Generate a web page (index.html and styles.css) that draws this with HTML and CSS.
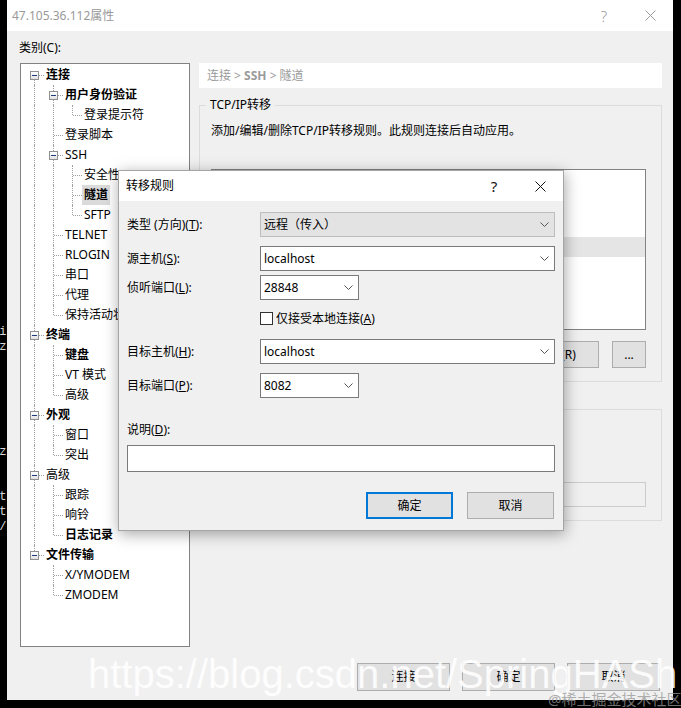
FILE: index.html
```html
<!DOCTYPE html>
<html lang="zh-CN">
<head>
<meta charset="utf-8">
<title>47.105.36.112属性</title>
<link rel="stylesheet" href="styles.css">
</head>
<body>
<div class="desk">
<pre class="term">xi
'z






.z


nt
st
0/</pre>

<div class="window">
  <div class="titlebar">
    <span class="title">47.105.36.112属性</span>
    <span class="cap cap-help">?</span>
    <span class="cap"><svg width="11" height="11" viewBox="0 0 11 11"><path d="M0.5 0.5 L10.5 10.5 M10.5 0.5 L0.5 10.5" stroke="#9a9a9a" stroke-width="1" fill="none"/></svg></span>
  </div>
  <div class="content">
    <div class="cat-label">类别(C):</div>
    <div class="main">
      <div class="tree">
        <div class="row"><span class="c f"><span class="box"></span></span><span class="lbl b">连接</span></div>
        <div class="row"><span class="c v"></span><span class="c t"><span class="box"></span></span><span class="lbl b">用户身份验证</span></div>
        <div class="row"><span class="c v"></span><span class="c v"></span><span class="c l"></span><span class="lbl">登录提示符</span></div>
        <div class="row"><span class="c v"></span><span class="c t"></span><span class="lbl">登录脚本</span></div>
        <div class="row"><span class="c v"></span><span class="c t"><span class="box"></span></span><span class="lbl">SSH</span></div>
        <div class="row"><span class="c v"></span><span class="c v"></span><span class="c t"></span><span class="lbl">安全性</span></div>
        <div class="row"><span class="c v"></span><span class="c v"></span><span class="c t"></span><span class="lbl b sel">隧道</span></div>
        <div class="row"><span class="c v"></span><span class="c v"></span><span class="c l"></span><span class="lbl">SFTP</span></div>
        <div class="row"><span class="c v"></span><span class="c t"></span><span class="lbl">TELNET</span></div>
        <div class="row"><span class="c v"></span><span class="c t"></span><span class="lbl">RLOGIN</span></div>
        <div class="row"><span class="c v"></span><span class="c t"></span><span class="lbl">串口</span></div>
        <div class="row"><span class="c v"></span><span class="c t"></span><span class="lbl">代理</span></div>
        <div class="row"><span class="c v"></span><span class="c l"></span><span class="lbl">保持活动状态</span></div>
        <div class="row"><span class="c t"><span class="box"></span></span><span class="lbl b">终端</span></div>
        <div class="row"><span class="c v"></span><span class="c t"></span><span class="lbl b">键盘</span></div>
        <div class="row"><span class="c v"></span><span class="c t"></span><span class="lbl">VT 模式</span></div>
        <div class="row"><span class="c v"></span><span class="c l"></span><span class="lbl">高级</span></div>
        <div class="row"><span class="c t"><span class="box"></span></span><span class="lbl b">外观</span></div>
        <div class="row"><span class="c v"></span><span class="c t"></span><span class="lbl">窗口</span></div>
        <div class="row"><span class="c v"></span><span class="c l"></span><span class="lbl">突出</span></div>
        <div class="row"><span class="c t"><span class="box"></span></span><span class="lbl">高级</span></div>
        <div class="row"><span class="c v"></span><span class="c t"></span><span class="lbl">跟踪</span></div>
        <div class="row"><span class="c v"></span><span class="c t"></span><span class="lbl">响铃</span></div>
        <div class="row"><span class="c v"></span><span class="c l"></span><span class="lbl b">日志记录</span></div>
        <div class="row"><span class="c l"><span class="box"></span></span><span class="lbl b">文件传输</span></div>
        <div class="row"><span class="c"></span><span class="c t"></span><span class="lbl">X/YMODEM</span></div>
        <div class="row"><span class="c"></span><span class="c l"></span><span class="lbl">ZMODEM</span></div>
      </div>
      <div class="panel">
        <div class="crumb">连接 &gt; <b>SSH</b> &gt; 隧道</div>
        <fieldset class="group">
          <legend>TCP/IP转移</legend>
          <p class="desc">添加/编辑/删除TCP/IP转移规则。此规则连接后自动应用。</p>
          <div class="listview"><div class="lv-row"></div></div>
          <div class="btnrow">
            <span class="btn w85">添加(A)...</span>
            <span class="btn w85">编辑(E)...</span>
            <span class="btn w85">删除(R)</span>
            <span class="btn w34">...</span>
          </div>
        </fieldset>
        <fieldset class="group g2">
          <legend>X11转移</legend>
          <div class="g2-row"><span class="chk"></span><span class="g2-text">转发X11连接到(X):</span></div>
          <div class="g2-field"></div>
        </fieldset>
      </div>
    </div>
    <div class="footer">
      <span class="btn fbtn">连接</span>
      <span class="btn fbtn">确定</span>
      <span class="btn fbtn">取消</span>
    </div>
  </div>
</div>

<div class="dialog">
  <div class="dtitle">
    <span class="dtitle-text">转移规则</span>
    <span class="cap dcap-help">?</span>
    <span class="cap"><svg width="11" height="11" viewBox="0 0 11 11"><path d="M0.5 0.5 L10.5 10.5 M10.5 0.5 L0.5 10.5" stroke="#111" stroke-width="1" fill="none"/></svg></span>
  </div>
  <div class="dbody">
    <div class="frow">
      <span class="flabel">类型 (方向)(<u>T</u>):</span>
      <span class="combo wide disabled"><span class="ctext">远程（传入）</span><svg class="chev" width="9" height="5" viewBox="0 0 9 5"><polyline points="0.5,0.5 4.5,4.5 8.5,0.5" fill="none" stroke="#555" stroke-width="1"/></svg></span>
    </div>
    <div class="frow r2">
      <span class="flabel">源主机(<u>S</u>):</span>
      <span class="combo wide"><span class="ctext">localhost</span><svg class="chev" width="9" height="5" viewBox="0 0 9 5"><polyline points="0.5,0.5 4.5,4.5 8.5,0.5" fill="none" stroke="#555" stroke-width="1"/></svg></span>
    </div>
    <div class="frow r3">
      <span class="flabel">侦听端口(<u>L</u>):</span>
      <span class="combo narrow"><span class="ctext">28848</span><svg class="chev" width="9" height="5" viewBox="0 0 9 5"><polyline points="0.5,0.5 4.5,4.5 8.5,0.5" fill="none" stroke="#555" stroke-width="1"/></svg></span>
    </div>
    <div class="frow rchk">
      <span class="flabel"></span>
      <span class="chk"></span><span class="chk-text">仅接受本地连接(<u>A</u>)</span>
    </div>
    <div class="frow r5">
      <span class="flabel">目标主机(<u>H</u>):</span>
      <span class="combo wide"><span class="ctext">localhost</span><svg class="chev" width="9" height="5" viewBox="0 0 9 5"><polyline points="0.5,0.5 4.5,4.5 8.5,0.5" fill="none" stroke="#555" stroke-width="1"/></svg></span>
    </div>
    <div class="frow r6">
      <span class="flabel">目标端口(<u>P</u>):</span>
      <span class="combo narrow"><span class="ctext">8082</span><svg class="chev" width="9" height="5" viewBox="0 0 9 5"><polyline points="0.5,0.5 4.5,4.5 8.5,0.5" fill="none" stroke="#555" stroke-width="1"/></svg></span>
    </div>
    <div class="dlabel">说明(<u>D</u>):</div>
    <div class="dfield"></div>
    <div class="dbtns">
      <span class="btn dbtn default">确定</span>
      <span class="btn dbtn">取消</span>
    </div>
  </div>
</div>

<div class="watermark">https://blog.csdn.net/SpringHASh</div>
<div class="juejin">@稀土掘金技术社区</div>
</div>
</body>
</html>
```

FILE: styles.css
```css
html, body {
  margin: 0;
  padding: 0;
  background: #000;
}
body {
  font-family: "Noto Sans", "Noto Sans CJK SC", sans-serif;
  font-size: 12px;
  color: #000;
}
.desk {
  position: relative;
  width: 681px;
  height: 708px;
  overflow: hidden;
  background: #000;
}
.term {
  position: absolute;
  left: -8px;
  top: 325px;
  width: 15px;
  margin: 0;
  overflow: hidden;
  font-family: "Liberation Mono", monospace;
  font-size: 12px;
  line-height: 15px;
  color: #d8d8d8;
  white-space: pre;
}

/* main window */
.window {
  position: absolute;
  left: 7px;
  top: 0;
  width: 666px;
  height: 700px;
  background: #f0f0f0;
}
.titlebar {
  display: flex;
  align-items: center;
  height: 31px;
  background: #fff;
}
.title {
  flex: 1;
  padding-left: 5px;
  color: #999;
  line-height: 16px;
}
.cap {
  flex: none;
  width: 46px;
  height: 31px;
  display: flex;
  align-items: center;
  justify-content: center;
}
.cap-help {
  color: #9a9a9a;
  font-size: 15px;
  font-weight: 300;
}
.content {
  padding: 0 11px 0 13px;
}
.cat-label {
  height: 32px;
  box-sizing: border-box;
  padding-top: 9px;
  line-height: 16px;
  margin-left: -1px;
}
.main {
  display: flex;
  gap: 9px;
  height: 584px;
}

/* tree */
.tree {
  flex: none;
  width: 170px;
  height: 584px;
  box-sizing: border-box;
  border: 1px solid #828282;
  background: #fff;
  overflow: hidden;
  padding: 1px 0 0 4px;
}
.row {
  display: flex;
  height: 20px;
  line-height: 20px;
  white-space: nowrap;
}
.c {
  flex: none;
  position: relative;
  width: 19px;
  height: 20px;
}
.c.v::before,
.c.t::before,
.c.l::before,
.c.f::before {
  content: "";
  position: absolute;
  left: 9px;
  top: 0;
  height: 20px;
  border-left: 1px dotted #a0a0a0;
}
.c.l::before {
  height: 10px;
}
.c.f::before {
  top: 10px;
  height: 10px;
}
.c.t::after,
.c.l::after,
.c.f::after {
  content: "";
  position: absolute;
  left: 10px;
  top: 10px;
  width: 9px;
  border-top: 1px dotted #a0a0a0;
}
.box {
  position: absolute;
  left: 5px;
  top: 6px;
  width: 9px;
  height: 9px;
  box-sizing: border-box;
  border: 1px solid #919191;
  background: linear-gradient(#ffffff, #e2e2e2);
  z-index: 1;
}
.box::after {
  content: "";
  position: absolute;
  left: 1px;
  top: 3px;
  width: 5px;
  height: 1px;
  background: #1f3c7a;
}
.lbl {
  padding: 0 2px;
}
.lbl.b {
  font-weight: bold;
}
.lbl.sel {
  background: #dadada;
}

/* right panel */
.panel {
  flex: none;
  width: 463px;
  display: flex;
  flex-direction: column;
}
.crumb {
  height: 25px;
  line-height: 25px;
  background: #fff;
  padding-left: 8px;
  color: #9a9a9a;
}
.crumb b {
  font-weight: bold;
}
.group {
  margin: 9px 0 0;
  padding: 0 15px 13px 11px;
  border: 1px solid #dcdcdc;
  min-width: 0;
}
.group legend {
  padding: 0 4px;
  margin-left: -5px;
  line-height: 16px;
}
.g2 {
  margin-top: 19px;
}
.desc {
  margin: 10px 0 0;
  line-height: 16px;
}
.listview {
  margin-top: 30px;
  height: 161px;
  box-sizing: border-box;
  border: 1px solid #828282;
  background: #fff;
  padding-top: 67px;
}
.lv-row {
  height: 20px;
  background: #e5e5e5;
}
.btnrow {
  display: flex;
  justify-content: flex-end;
  gap: 13px;
  margin-top: 11px;
}
.btn {
  flex: none;
  height: 27px;
  box-sizing: border-box;
  border: 1px solid #adadad;
  background: #e1e1e1;
  display: flex;
  align-items: center;
  justify-content: center;
  line-height: 16px;
  white-space: nowrap;
}
.w85 {
  width: 85px;
}
.w34 {
  width: 34px;
}
.g2-row {
  display: flex;
  align-items: center;
  gap: 3px;
  margin-top: 10px;
  height: 20px;
}
.g2-field {
  margin-top: 35px;
  height: 25px;
  box-sizing: border-box;
  border: 1px solid #cccccc;
  background: #f0f0f0;
}
.footer {
  display: flex;
  justify-content: flex-end;
  gap: 12px;
  margin-top: 16px;
  margin-right: 2px;
}
.fbtn {
  width: 93px;
  height: 28px;
}

/* dialog */
.dialog {
  position: absolute;
  left: 118px;
  top: 170px;
  width: 446px;
  height: 361px;
  box-sizing: border-box;
  border: 1px solid #a5a5a5;
  background: #f0f0f0;
  box-shadow: 1px 3px 14px rgba(0, 0, 0, 0.35);
}
.dtitle {
  display: flex;
  align-items: center;
  height: 30px;
  background: #fff;
}
.dtitle .cap {
  height: 30px;
}
.dtitle-text {
  flex: 1;
  padding-left: 7px;
  line-height: 16px;
}
.dcap-help {
  color: #111;
  font-size: 15px;
}
.dbody {
  padding: 11px 8px 0 8px;
}
.frow {
  display: flex;
  align-items: center;
  height: 25px;
}
.flabel {
  flex: none;
  width: 133px;
  line-height: 16px;
  white-space: nowrap;
}
.combo {
  height: 25px;
  box-sizing: border-box;
  border: 1px solid #7a7a7a;
  background: #fff;
  display: flex;
  align-items: center;
  padding: 0 5px 0 3px;
  line-height: 16px;
}
.combo.wide {
  flex: 1;
}
.combo.narrow {
  flex: none;
  width: 99px;
}
.combo.disabled {
  background: #e3e3e3;
  border-color: #bdbdbd;
}
.ctext {
  flex: 1;
  white-space: nowrap;
}
.chev {
  flex: none;
  display: block;
}
.r2 {
  margin-top: 9px;
}
.r3 {
  margin-top: 4px;
}
.rchk {
  margin-top: 9px;
  height: 19px;
}
.r5 {
  margin-top: 11px;
}
.r6 {
  margin-top: 9px;
}
.chk {
  flex: none;
  width: 13px;
  height: 13px;
  box-sizing: border-box;
  border: 1px solid #333;
  background: #fff;
}
.chk-text {
  margin-left: 3px;
  line-height: 16px;
}
.dlabel {
  margin-top: 24px;
  line-height: 16px;
}
.dfield {
  margin-top: 7px;
  height: 27px;
  box-sizing: border-box;
  border: 1px solid #7a7a7a;
  background: #fff;
}
.dbtns {
  display: flex;
  justify-content: flex-end;
  gap: 14px;
  margin-top: 20px;
  margin-right: 1px;
}
.dbtn {
  width: 87px;
  height: 27px;
}
.dbtn.default {
  border: 2px solid #0078d7;
}

/* overlays */
.watermark {
  position: absolute;
  left: 88px;
  top: 654px;
  font-family: "Liberation Sans", Arial, sans-serif;
  font-size: 40px;
  line-height: 40px;
  color: rgba(255, 255, 255, 0.88);
  white-space: nowrap;
}
.juejin {
  position: absolute;
  left: 548px;
  top: 690px;
  font-size: 15px;
  line-height: 18px;
  color: rgba(150, 150, 150, 0.75);
  white-space: nowrap;
}
```
